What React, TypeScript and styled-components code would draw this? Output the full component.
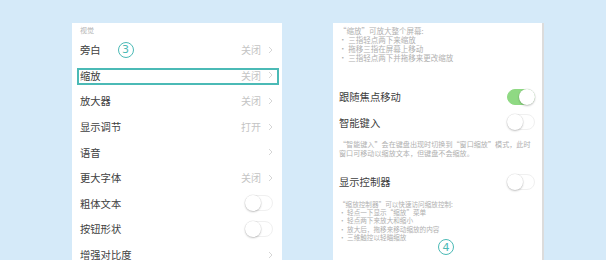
import React from 'react';
import styled, { createGlobalStyle } from 'styled-components';

const GlobalStyle = createGlobalStyle`
  html, body {
    margin: 0;
    padding: 0;
    height: 260px;
    overflow: hidden;
    background: #d5eaf9;
  }
  body {
    font-family: "Noto Sans CJK SC", "Noto Sans", sans-serif;
  }
`

const TEAL = '#4bbab6';

interface RowData {
  label: string,
  value?: string,
  kind: 'link' | 'toggle',
  badge?: string,
  highlighted?: boolean
}

const visionRows: RowData[] = [
  { label: '旁白', value: '关闭', kind: 'link', badge: '3' },
  { label: '缩放', value: '关闭', kind: 'link', highlighted: true },
  { label: '放大器', value: '关闭', kind: 'link' },
  { label: '显示调节', value: '打开', kind: 'link' },
  { label: '语音', kind: 'link' },
  { label: '更大字体', value: '关闭', kind: 'link' },
  { label: '粗体文本', kind: 'toggle' },
  { label: '按钮形状', kind: 'toggle' },
  { label: '增强对比度', kind: 'link' },
]

const Chevron = () => (
  <svg width="5" height="8" viewBox="0 0 5 8">
    <polyline points="1,1 4,4 1,7" fill="none" stroke="#d6d6d6" strokeWidth="1" />
  </svg>
)

export default function App() {
  return (
    <>
      <GlobalStyle />
      <Page>
        <Panel>
          <SectionHeader>视觉</SectionHeader>
          {visionRows.map((row) => (
            <Row key={row.label} $highlighted={row.highlighted}>
              <Label>
                {row.label}
                {row.badge && <Badge>{row.badge}</Badge>}
              </Label>
              {row.kind === 'link' ? (
                <Trailing>
                  {row.value && <Value>{row.value}</Value>}
                  <Chevron />
                </Trailing>
              ) : (
                <Toggle $on={false} />
              )}
            </Row>
          ))}
        </Panel>

        <RightPanel>
          <Note $size={7.5} $lineHeight={9}>
            <NoteLine>“缩放”可放大整个屏幕:</NoteLine>
            <NoteLine>• 三指轻点两下来缩放</NoteLine>
            <NoteLine>• 拖移三指在屏幕上移动</NoteLine>
            <NoteLine>• 三指轻点两下并拖移来更改缩放</NoteLine>
          </Note>
          <Row $gapTop={22}>
            <Label>跟随焦点移动</Label>
            <Toggle $on />
          </Row>
          <Row>
            <Label>智能键入</Label>
            <Toggle $on={false} />
          </Row>
          <Note $size={7.1} $lineHeight={8.5} $gapTop={5}>
            “智能键入”会在键盘出现时切换到“窗口缩放”模式，此时窗口可移动以缩放文本，但键盘不会缩放。
          </Note>
          <Row $gapTop={12}>
            <Label>显示控制器</Label>
            <Toggle $on={false} />
          </Row>
          <Note $size={6.6} $lineHeight={8.3} $gapTop={5}>
            <NoteLine>“缩放控制器”可以快速访问缩放控制:</NoteLine>
            <NoteLine>• 轻点一下显示“缩放”菜单</NoteLine>
            <NoteLine>• 轻点两下来放大和缩小</NoteLine>
            <NoteLine>• 放大后，拖移来移动缩放的内容</NoteLine>
            <NoteLine>• 三维触控以轻瞄缩放</NoteLine>
          </Note>
          <FloatingBadge>4</FloatingBadge>
        </RightPanel>
      </Page>
    </>
  )
}

const Page = styled.div`
  display: flex;
  align-items: flex-start;
  gap: 51px;
  padding: 23px 0 0 72px;
  height: 237px;
`

const Panel = styled.div`
  width: 210px;
  height: 100%;
  background: #ffffff;
  box-sizing: border-box;
  padding: 0 9px 0 8px;
  overflow: hidden;
`

const RightPanel = styled(Panel)`
  position: relative;
  width: 211px;
  padding: 3px 7px 0 6px;
  border-right: 2px solid #dcdcdc;
`

const SectionHeader = styled.div`
  height: 14px;
  line-height: 14px;
  font-size: 7px;
  color: #b4b4b4;
`

const Row = styled.div<{ $highlighted?: boolean, $gapTop?: number }>`
  position: relative;
  display: flex;
  align-items: center;
  justify-content: space-between;
  height: 25.6px;
  margin-top: ${p => p.$gapTop ?? 0}px;

  ${p => p.$highlighted && `
    &::after {
      content: "";
      position: absolute;
      top: 5px;
      bottom: 3px;
      left: -3px;
      right: -6px;
      border: 2px solid ${TEAL};
    }
  `}
`

const Label = styled.span`
  display: flex;
  align-items: center;
  font-size: 10.3px;
  color: #404040;
`

const Badge = styled.span`
  display: inline-flex;
  align-items: center;
  justify-content: center;
  width: 14px;
  height: 14px;
  margin-left: 17px;
  border: 1.5px solid ${TEAL};
  border-radius: 50%;
  color: ${TEAL};
  font-family: "DejaVu Sans", sans-serif;
  font-size: 11px;
  line-height: 1;
`

const FloatingBadge = styled(Badge)`
  position: absolute;
  left: 105px;
  top: 216px;
  margin: 0;
`

const Trailing = styled.span`
  display: flex;
  align-items: center;
  gap: 7px;
`

const Value = styled.span`
  font-size: 10px;
  color: #c4c4c4;
`

const Toggle = styled.span<{ $on: boolean }>`
  position: relative;
  width: 28px;
  height: 16px;
  border-radius: 8px;
  box-sizing: border-box;
  background: ${p => p.$on ? '#8fd983' : '#ffffff'};
  border: 1px solid ${p => p.$on ? '#8fd983' : '#f0f0f0'};

  &::after {
    content: "";
    position: absolute;
    top: -1px;
    left: ${p => p.$on ? '11px' : '-1px'};
    width: 16px;
    height: 16px;
    border-radius: 50%;
    background: #ffffff;
    box-shadow: 0 1px 2px rgba(0, 0, 0, 0.22), 0 0 0 0.5px rgba(0, 0, 0, 0.08);
  }
`

const Note = styled.div<{ $size: number, $lineHeight: number, $gapTop?: number }>`
  font-size: ${p => p.$size}px;
  line-height: ${p => p.$lineHeight}px;
  color: #b0b0b0;
  margin-top: ${p => p.$gapTop ?? 0}px;
`

const NoteLine = styled.div`
  height: inherit;
  white-space: nowrap;
`
